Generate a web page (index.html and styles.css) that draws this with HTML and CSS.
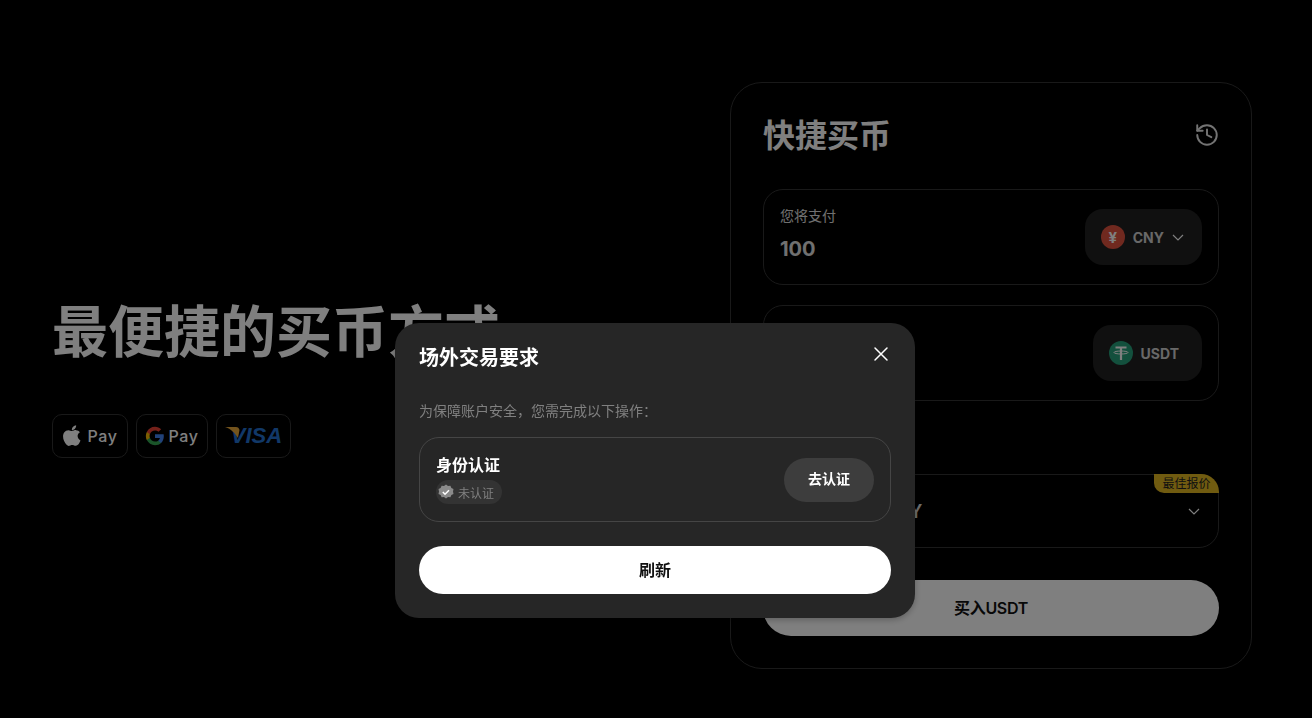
FILE: index.html
```html
<!DOCTYPE html>
<html lang="zh-CN">
<head>
<meta charset="utf-8">
<title>快捷买币</title>
<link rel="stylesheet" href="styles.css">
</head>
<body>
<main class="page">
  <section class="hero">
    <h1 class="hero-title">最便捷的买币方式</h1>
    <div class="chips">
      <div class="chip chip-apple">
        <svg class="chip-icon" width="19" height="21" viewBox="3.500 2.800 16.500 18.300" fill="#fff"><path d="M17.050 20.280c-.98.95-2.050.8-3.080.35-1.090-.46-2.090-.48-3.240 0-1.440.62-2.200.44-3.060-.35C2.790 15.250 3.510 7.590 9.050 7.310c1.350.07 2.290.74 3.080.8 1.180-.24 2.310-.93 3.570-.84 1.510.12 2.650.72 3.400 1.800-3.120 1.870-2.380 5.980.48 7.130-.57 1.500-1.310 2.990-2.540 4.090zM12.030 7.250c-.15-2.230 1.660-4.070 3.740-4.250.29 2.580-2.340 4.500-3.740 4.250z"/></svg>
        <span class="chip-text">Pay</span>
      </div>
      <div class="chip chip-google">
        <svg class="chip-icon" width="20" height="20" viewBox="0 0 24 24"><path fill="#4285F4" d="M22.560 12.250c0-.78-.07-1.530-.2-2.250H12v4.260h5.920c-.26 1.370-1.040 2.530-2.210 3.310v2.770h3.570c2.080-1.920 3.280-4.740 3.280-8.090z"/><path fill="#34A853" d="M12 23c2.970 0 5.460-.98 7.280-2.660l-3.570-2.770c-.98.66-2.230 1.060-3.710 1.060-2.860 0-5.290-1.930-6.160-4.530H2.180v2.840C3.990 20.530 7.700 23 12 23z"/><path fill="#FBBC05" d="M5.840 14.090c-.22-.66-.35-1.360-.35-2.090s.13-1.430.35-2.090V7.070H2.180C1.430 8.550 1 10.220 1 12s.43 3.450 1.180 4.930l3.660-2.840z"/><path fill="#EA4335" d="M12 5.380c1.620 0 3.060.56 4.210 1.640l3.150-3.150C17.450 2.090 14.970 1 12 1 7.700 1 3.990 3.470 2.180 7.070l3.660 2.840c.87-2.600 3.300-4.530 6.160-4.530z"/></svg>
        <span class="chip-text">Pay</span>
      </div>
      <div class="chip chip-visa">
        <svg class="visa-wing" width="18" height="16" viewBox="0 0 18 16"><path fill="#e8a83a" d="M0 1h11c2 0 3 1 3.500 3L13 12C10 7 6 3 0 1z"/></svg>
        <span class="visa-text">VISA</span>
      </div>
    </div>
  </section>

  <section class="card">
    <header class="card-head">
      <h2 class="card-title">快捷买币</h2>
      <svg class="history" width="26" height="26" viewBox="0 0 24 24" fill="none" stroke="#fff" stroke-width="1.800" stroke-linecap="round" stroke-linejoin="round"><path d="M3 12a9 9 0 1 0 9-9 9.750 9.750 0 0 0-6.740 2.740L3 8"/><path d="M3 3v5h5"/><path d="M12 7v5l4 2"/></svg>
    </header>

    <div class="field">
      <div class="field-main">
        <div class="field-label">您将支付</div>
        <div class="field-value">100</div>
      </div>
      <div class="pill">
        <span class="coin coin-cny">¥</span>
        <span class="pill-text">CNY</span>
        <svg class="chev" width="16" height="16" viewBox="0 0 16 16" fill="none" stroke="#fff" stroke-width="1.200"><path d="M3 6l5 5 5-5"/></svg>
      </div>
    </div>

    <div class="field field-second">
      <div class="field-main">
        <div class="field-label">您将收到</div>
        <div class="field-value">13.85</div>
      </div>
      <div class="pill pill-plain">
        <span class="coin coin-usdt">
          <svg width="20" height="20" viewBox="0 0 20 20" fill="none" stroke="#fff"><path stroke-width="2.200" d="M4.500 4.500h11M10 4.500V17"/><ellipse cx="10" cy="9.500" rx="7" ry="1.500" stroke-width="1"/></svg>
        </span>
        <span class="pill-text">USDT</span>
      </div>
    </div>

    <div class="section-label">支付方式</div>

    <div class="method">
      <span class="method-text">1 USDT≈7.2 CNY</span>
      <span class="best-tag">最佳报价</span>
      <svg class="chev" width="16" height="16" viewBox="0 0 16 16" fill="none" stroke="#fff" stroke-width="1.200"><path d="M3 6l5 5 5-5"/></svg>
    </div>

    <button class="buy" type="button">买入USDT</button>
  </section>
</main>

<div class="overlay">
  <div class="modal">
    <div class="modal-head">
      <h3 class="modal-title">场外交易要求</h3>
      <svg class="close" width="16" height="16" viewBox="0 0 16 16" fill="none" stroke="#fff" stroke-width="1.500" stroke-linecap="round"><path d="M2 2l12 12M14 2 2 14"/></svg>
    </div>
    <p class="modal-sub">为保障账户安全，您需完成以下操作：</p>
    <div class="kyc">
      <div class="kyc-main">
        <div class="kyc-name">身份认证</div>
        <div class="kyc-badge">
          <svg width="16" height="16" viewBox="0 0 16 16"><path fill="#8a8a8a" d="M8 .5l2 1.400 2.400-.2 1 2.200 2.100 1.200-.5 2.400.5 2.400-2.100 1.200-1 2.200-2.400-.2-2 1.400-2-1.400-2.400.2-1-2.200L.5 9.900 1 7.500.5 5.100l2.100-1.200 1-2.200 2.400.2z"/><path fill="none" stroke="#fff" stroke-width="1.500" d="M4.800 8l2.200 2.200 4-4"/></svg>
          <span class="kyc-status">未认证</span>
        </div>
      </div>
      <button class="kyc-btn" type="button">去认证</button>
    </div>
    <button class="refresh" type="button">刷新</button>
  </div>
</div>
</body>
</html>
```
FILE: styles.css
```css
* { box-sizing: border-box; }

html, body {
  margin: 0;
  height: 718px;
  overflow: hidden;
  background: #000;
  color: #fff;
  font-family: Inter, "Noto Sans CJK SC", sans-serif;
}

h1, h2, h3, p { margin: 0; }

button {
  border: 0;
  font-family: inherit;
  cursor: pointer;
}

.page {
  display: flex;
  justify-content: space-between;
  align-items: center;
  height: 718px;
  padding: 82px 60px 49px 52px;
}

/* Hero */
.hero {
  padding-top: 6px;
}

.hero-title {
  font-size: 56px;
  line-height: 64px;
  font-weight: 700;
  white-space: nowrap;
}

.chips {
  display: flex;
  gap: 8px;
  margin-top: 50px;
}

.chip {
  display: flex;
  align-items: center;
  justify-content: center;
  height: 44px;
  border: 1px solid #333;
  border-radius: 10px;
}

.chip-apple { width: 76px; gap: 6px; }
.chip-google { width: 72px; gap: 3px; }
.chip-visa { width: 75px; padding-left: 6px; position: relative; }

.chip-text {
  font-size: 16px;
  font-weight: 500;
  letter-spacing: .6px;
  color: #fff;
}

.visa-text {
  font-family: "Liberation Sans", sans-serif;
  font-size: 22px;
  font-weight: 700;
  font-style: italic;
  color: #2271d0;
}

.visa-wing {
  position: absolute;
  left: 8px;
  top: 11px;
}

/* Card */
.card {
  width: 522px;
  height: 587px;
  padding: 32px;
  border: 1px solid #333;
  border-radius: 32px;
}

.card-head {
  display: flex;
  align-items: center;
  justify-content: space-between;
  height: 40px;
  margin-bottom: 34px;
}

.card-title {
  padding-top: 2px;
  font-size: 32px;
  line-height: 40px;
  font-weight: 700;
}

.history { margin-right: -1px; opacity: .9; }

.field {
  display: flex;
  align-items: center;
  justify-content: space-between;
  height: 96px;
  padding: 0 16px;
  border: 1px solid #333;
  border-radius: 20px;
}

.field-second { margin-top: 20px; }

.field-main { padding-bottom: 5px; }

.field-label {
  font-size: 14px;
  line-height: 20px;
  color: #e0e0e0;
}

.field-value {
  margin-top: 9px;
  font-size: 20px;
  line-height: 28px;
  font-weight: 700;
  color: #e0e0e0;
}

.pill {
  display: flex;
  align-items: center;
  gap: 8px;
  height: 56px;
  padding: 0 16px;
  border-radius: 18px;
  background: #202020;
}

.pill-plain { padding-right: 23px; }

.pill-text {
  font-size: 14px;
  font-weight: 700;
  color: #d0d0d0;
}

.pill .chev { margin-left: -2px; }

.coin {
  display: flex;
  align-items: center;
  justify-content: center;
  width: 24px;
  height: 24px;
  border-radius: 50%;
  color: #fff;
  font-size: 15px;
  font-weight: 700;
}

.coin-cny { background: #e0523f; }
.coin-usdt { background: #26a17b; }

.section-label {
  height: 33px;
  margin: 20px 0;
  font-size: 14px;
  line-height: 33px;
}

.method {
  position: relative;
  display: flex;
  align-items: center;
  justify-content: space-between;
  height: 74px;
  padding: 0 16px;
  border: 1px solid #333;
  border-radius: 20px;
}

.method-text {
  font-size: 18px;
  font-weight: 600;
  color: #d8d8d8;
}

.best-tag {
  position: absolute;
  top: -1px;
  right: -1px;
  height: 19px;
  padding: 0 8.500px;
  border-radius: 0 18px 0 10px;
  background: #e0b620;
  color: #222;
  font-size: 12px;
  line-height: 19px;
}

.buy {
  display: block;
  width: 100%;
  height: 56px;
  margin-top: 32px;
  padding-bottom: 3px;
  border-radius: 28px;
  background: #fff;
  color: #111;
  font-size: 16px;
  font-weight: 600;
  letter-spacing: -.3px;
}

/* Modal */
.overlay {
  position: fixed;
  inset: 0;
  display: flex;
  justify-content: center;
  align-items: flex-start;
  padding: 323px 2px 0 0;
  background: rgba(0, 0, 0, .5);
}

.modal {
  width: 520px;
  padding: 23px 24px 24px;
  border-radius: 24px;
  background: #262626;
  box-shadow: 0 2px 6px rgba(0, 0, 0, .25);
}

.modal-head {
  display: flex;
  justify-content: space-between;
  align-items: flex-start;
  height: 24px;
}

.modal-title {
  font-size: 20px;
  line-height: 24px;
  font-weight: 700;
}

.close { margin: 0 2px 0 0; }

.modal-sub {
  margin-top: 31px;
  font-size: 14px;
  line-height: 20px;
  color: #808080;
}

.kyc {
  display: flex;
  align-items: center;
  justify-content: space-between;
  height: 85px;
  margin-top: 16px;
  padding: 0 16px;
  border: 1px solid #454545;
  border-radius: 20px;
}

.kyc-main { margin-top: 2px; }

.kyc-name {
  margin-top: -2px;
  font-size: 16px;
  line-height: 20px;
  font-weight: 600;
}

.kyc-badge {
  display: flex;
  align-items: center;
  gap: 4px;
  width: 66px;
  height: 24px;
  margin-top: 5px;
  padding-left: 2px;
  border-radius: 12px;
  background: #333;
}

.kyc-status {
  font-size: 12px;
  color: #808080;
}

.kyc-btn {
  width: 90px;
  height: 44px;
  padding-bottom: 4px;
  border-radius: 22px;
  background: #3d3d3d;
  color: #fff;
  font-size: 14px;
  font-weight: 600;
}

.refresh {
  display: block;
  width: 100%;
  height: 48px;
  margin-top: 24px;
  padding-bottom: 4px;
  border-radius: 24px;
  background: #fff;
  color: #111;
  font-size: 16px;
  font-weight: 600;
}
```
